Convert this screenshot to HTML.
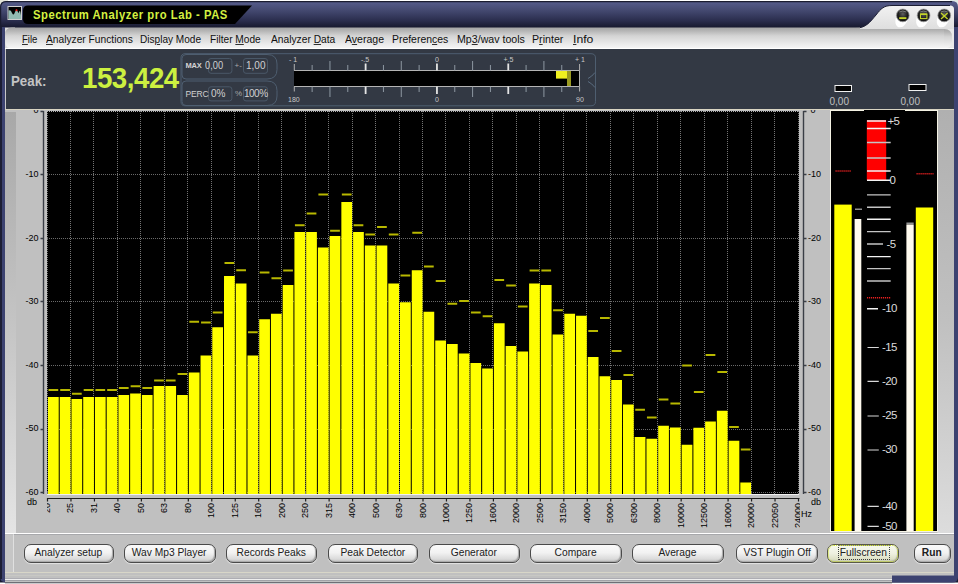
<!DOCTYPE html>
<html><head><meta charset="utf-8"><style>
*{box-sizing:border-box}
html,body{margin:0;padding:0}
body{width:958px;height:584px;position:relative;overflow:hidden;background:#fff;font-family:"Liberation Sans", sans-serif;}
.abs{position:absolute}
.menu{position:absolute;top:33px;transform-origin:0 0;font-size:11px;color:#101010;white-space:nowrap;line-height:12px}
.menu u{text-decoration:underline;text-decoration-thickness:1px;text-underline-offset:1px;text-decoration-color:#303030}
.yl{position:absolute;left:0;width:38.5px;text-align:right;font-size:9px;line-height:12px;color:#000}
.yr{position:absolute;left:808px;width:30px;text-align:left;font-size:9px;line-height:12px;color:#000}
.xl{position:absolute;top:503px;height:10px;font-size:9px;line-height:10px;color:#000;transform-origin:0 0;transform:rotate(-90deg) translateX(-100%);white-space:nowrap}
.btn{position:absolute;top:543.5px;height:19px;border-radius:7px;border:1px solid #4a4a4a;background:linear-gradient(#fafafa 0%,#f2f2f2 45%,#dcdcdc 80%,#c4c4c4 100%);box-shadow:0 1px 1px #e4e4e4, inset -1px -1px 1px #a8a8a8;font-size:11px;line-height:16px;text-align:center;color:#202020;white-space:nowrap}
.btn span{display:inline-block;transform:scaleX(0.93);position:relative;top:-1px}
</style></head><body>
<!-- window frame -->
<div class="abs" style="left:0;top:0;width:958px;height:584px;background:#c0c0c0"></div>
<svg class="abs" style="left:0;top:0" width="958" height="584">
 <defs>
  <linearGradient id="tg" gradientUnits="userSpaceOnUse" x1="0" y1="2" x2="0" y2="27">
   <stop offset="0" stop-color="#555b8a"/><stop offset="0.35" stop-color="#43486f"/><stop offset="0.75" stop-color="#2a2d4d"/><stop offset="1" stop-color="#181a30"/>
  </linearGradient>
  <linearGradient id="sg" x1="0" y1="0" x2="0" y2="1">
   <stop offset="0" stop-color="#f2f2f2"/><stop offset="1" stop-color="#dedede"/>
  </linearGradient>
  <linearGradient id="mg" x1="0" y1="0" x2="0" y2="1">
   <stop offset="0" stop-color="#a4a4a4"/><stop offset="0.15" stop-color="#b4b4b4"/><stop offset="0.4" stop-color="#d4d4d4"/><stop offset="0.75" stop-color="#e8e8e8"/><stop offset="1" stop-color="#f6f6f6"/>
  </linearGradient>
  <linearGradient id="lsg" x1="0" y1="0" x2="0" y2="1">
   <stop offset="0" stop-color="#a8a8a8"/><stop offset="0.5" stop-color="#c4c4c4"/><stop offset="1" stop-color="#e4e4e4"/>
  </linearGradient>
  <linearGradient id="rsg" x1="0" y1="0" x2="0" y2="1">
   <stop offset="0" stop-color="#b0b0b0"/><stop offset="0.5" stop-color="#c0c0c0"/><stop offset="1" stop-color="#dcdcdc"/>
  </linearGradient>
  <radialGradient id="bg1" cx="0.5" cy="0.35" r="0.6">
   <stop offset="0" stop-color="#606060"/><stop offset="0.7" stop-color="#1c1c1c"/><stop offset="1" stop-color="#101010"/>
  </radialGradient>
 </defs>
 <rect x="0" y="0" width="958" height="584" fill="#ffffff"/>
 <rect x="0" y="0" width="8" height="8" fill="#e4e4d8"/>
 <rect x="950" y="0" width="8" height="8" fill="#dfe8e4"/>
 <!-- frame navy -->
 <path d="M0 8Q0 1 7 1H952Q958 1 958 7V584H0Z" fill="url(#tg)"/>

 <path d="M0.6 27V7Q0.6 1.6 6 1.6H952" fill="none" stroke="#1a1c30" stroke-width="1.2"/>
 <!-- title black tab -->
 <path d="M28 5.5H252L235 24H28Q23 24 23 19V10.5Q23 5.5 28 5.5Z" fill="#000"/>
 <!-- icon -->
 <rect x="7.5" y="6" width="14.5" height="14" fill="#d0d0d0"/>
 <rect x="8.5" y="7" width="12.5" height="12" fill="#000"/>
 <path d="M8.5 19V10.5L10 10.3L11 11L12 13L13 14.5L14 14.2L15 12L16 10.3L17 10.5L18 12L18.6 13.2L19.5 10.8L20.3 11.5L21 15.5V19Z" fill="#92bab2"/>
 <circle cx="16.5" cy="10.2" r="1" fill="#ff2020"/>
 <!-- silver area top-right -->
 <path d="M856 28C866 28 870 22 876 15C881 8.5 884 5.5 892 5.5H950Q954 5.5 954 9V29.5H856Z" fill="url(#sg)"/>
 <path d="M856 28C866 28 870 22 876 15C881 8.5 884 5.5 892 5.5H950" fill="none" stroke="#1c1e34" stroke-width="1"/>
 <!-- menubar -->
 <rect x="5" y="27.5" width="10" height="21" fill="#dcdcdc"/>
 <path d="M12 27.5H860V29H944Q952 29 952 37V41Q952 48.5 944 48.5H12Q5 48.5 5 41V35Q5 27.5 12 27.5Z" fill="url(#mg)"/>
 <rect x="944" y="29" width="10" height="20" fill="#e8e8e8"/>
 <path d="M944 29Q952 29 952 37V41Q952 48.5 944 48.5Z" fill="url(#mg)"/>
 <rect x="5" y="48" width="949" height="1" fill="#ffffff"/>
 <!-- dark panel -->
 <rect x="5" y="49" width="949" height="60" fill="#333944"/>
 <rect x="5" y="49" width="1" height="60" fill="#c8c8c8"/>
 <rect x="5" y="109" width="949" height="1" fill="#d8d4c2"/>
 <!-- main gray -->
 <rect x="5" y="110" width="949" height="424" fill="#c0c0c0"/>
 <rect x="5" y="112" width="11" height="421" fill="url(#lsg)"/>
 <rect x="937.5" y="110" width="16.5" height="423" fill="url(#rsg)"/>
 <rect x="5" y="533" width="949" height="1.2" fill="#ffffff"/>
 <!-- button panel -->
 <rect x="5" y="534.2" width="949" height="38" fill="#c0c0c0"/>
 <rect x="5" y="534.2" width="8" height="38" fill="#c6c6c6"/>
 <rect x="13" y="534.2" width="1" height="38" fill="#e0e0e0"/>
 <rect x="5" y="572" width="949" height="1" fill="#d8d6c8"/>
 <rect x="5" y="573" width="949" height="5.5" fill="#c0c0c0"/>
 <rect x="5" y="575" width="949" height="1" fill="#c8c8c4"/>
 <rect x="5" y="578.5" width="887" height="2" fill="#eeeeee"/>
 <rect x="5" y="580.5" width="887" height="2" fill="#c0c0c0"/>
 <rect x="0" y="582.5" width="958" height="1.5" fill="#ffffff"/>
 <rect x="5" y="582.3" width="887" height="1" fill="#505058"/>
 <path d="M892 575.5H954V27H958V577Q958 582.5 952 582.5H892Z" fill="#3c4270"/>
 <path d="M0 27H5V582.5H6Q0 582.5 0 576Z" fill="#3c4270"/>
 <rect x="0" y="27" width="2" height="552" fill="#1c1e34"/>
 <path d="M185 53.7H591Q595.5 53.7 595.5 58V101.5Q595.5 105.8 591 105.8H185Q181 105.8 181 101.5V58Q181 53.7 185 53.7Z" fill="none" stroke="#4e5e70" stroke-width="1"/>
<path d="M186 54.5H267Q277 54.5 277 64V69.5Q277 79 267 79H186Q182 79 182 75V58.5Q182 54.5 186 54.5Z" fill="none" stroke="#4e5e70" stroke-width="1"/>
<path d="M186 81H267Q277 81 277 90.5V96Q277 105.5 267 105.5H186Q182 105.5 182 101.5V85Q182 81 186 81Z" fill="none" stroke="#4e5e70" stroke-width="1"/>
<rect x="208.5" y="58.5" width="23.400000000000006" height="14.799999999999997" rx="2.5" fill="none" stroke="#4a5868" stroke-width="1"/>
<rect x="243.5" y="58.5" width="24" height="14.799999999999997" rx="2.5" fill="none" stroke="#4a5868" stroke-width="1"/>
<rect x="208.5" y="86.8" width="23.400000000000006" height="14.100000000000009" rx="2.5" fill="none" stroke="#4a5868" stroke-width="1"/>
<rect x="243.5" y="86.8" width="24" height="14.100000000000009" rx="2.5" fill="none" stroke="#4a5868" stroke-width="1"/>
<rect x="294" y="70.5" width="285.5" height="16" fill="#000"/>
<path d="M294 70.5H579.5M294 86.5H579.5M579.5 70.5V86.5" stroke="#b4b4b4" stroke-width="1" fill="none"/>
<path d="M312.13 65V70.5M312.13 86.5V92M329.96 61V70.5M329.96 86.5V97M347.79 65V70.5M347.79 86.5V92M383.45 65V70.5M383.45 86.5V92M401.28 61V70.5M401.28 86.5V97M419.11 65V70.5M419.11 86.5V92M454.77 65V70.5M454.77 86.5V92M472.60 61V70.5M472.60 86.5V97M490.43 65V70.5M490.43 86.5V92M526.09 65V70.5M526.09 86.5V92M543.92 61V70.5M543.92 86.5V97M561.75 65V70.5M561.75 86.5V92" stroke="#8e98a2" stroke-width="1" fill="none"/>
<path d="M294.30 64V70.5M294.30 86.5V91.5M579.58 64V70.5M579.58 86.5V91.5" stroke="#b0b0b0" stroke-width="1" fill="none"/>
<path d="M365.62 63.5V70.5M365.62 86.5V94M436.94 63.5V70.5M436.94 86.5V94M508.26 63.5V70.5M508.26 86.5V94" stroke="#e4e4e4" stroke-width="1.8" fill="none"/>
<rect x="556" y="71" width="11" height="7.6" fill="#f0f020"/>
<rect x="567" y="71" width="4" height="15" fill="#9a9a20"/>
<path d="M595 72.5Q592 76.5 588 78.5M588 81.5Q592 83.5 595 87.5" stroke="#5a6c80" stroke-width="1" fill="none"/>
<rect x="835" y="85.5" width="16.5" height="6" fill="#000" stroke="#f0f0f0" stroke-width="1"/>
<rect x="909" y="84.5" width="17" height="6" fill="#000" stroke="#f0f0f0" stroke-width="1"/>
<rect x="830.5" y="110.5" width="107" height="421" fill="#000" stroke="#f4f2e4" stroke-width="1"/>
<rect x="864" y="110" width="41" height="1.5" fill="#000"/>
<rect x="834.3" y="204.6" width="17.4" height="326.4" fill="#ffff00"/>
<rect x="854.6" y="219" width="6.7" height="312" fill="#fffaee"/>
<rect x="855" y="208.5" width="7" height="1.5" fill="#909090"/>
<rect x="906.4" y="224.4" width="7.3" height="306.6" fill="#fffaee"/>
<rect x="906.4" y="222.5" width="7.3" height="1.5" fill="#909090"/>
<rect x="915.8" y="207.5" width="17.4" height="323.5" fill="#ffff00"/>
<path d="M835.5 171H851.5M916.5 173.7H933.5M867 297.8H890.5" stroke="#e82020" stroke-width="1.4" stroke-dasharray="1.2 0.8"/>
<rect x="866.8" y="120.2" width="19.4" height="60" fill="#ff0000"/>
<path d="M867 128.5H890.7M867 171.0H890.7M867 180.3H890.7M867 219.3H890.7M867 256.6H890.7M867 308.7H878M867 121H886" stroke="#f4f4f4" stroke-width="1.4" fill="none"/>
<path d="M867 142.5H890.7M867 158.0H890.7M867 194.9H890.7M867 207.2H890.7M867 231.6H890.7M867 268.6H890.7M867 281.0H890.7M867 244H883" stroke="#c4c4c4" stroke-width="1.4" fill="none"/>
<path d="M867.5 347.5H878.8M867.5 381.4H878.8M867.5 416.0H878.8M867.5 450.0H878.8M867.5 506.4H878.8M867.5 526.4H878.8" stroke="#d8d8d8" stroke-width="1.2" fill="none"/>
<path d="M896.3 16Q893.8 24 897.8 27Q903.8 29 907.8 20Z" fill="#ffffff" opacity="0.95"/>
<circle cx="902.8" cy="15.4" r="6.4" fill="#2c2c2c" stroke="#9a9a9a" stroke-width="0.7"/>
<circle cx="902.8" cy="15.6" r="5.4" fill="url(#bg1)"/>
<path d="M899.3 12Q902.8 10 906.3 12" stroke="#9a9a9a" stroke-width="0.7" fill="none"/>
<rect x="899.1999999999999" y="17.2" width="7.2" height="1.9" fill="#c4d428"/>
<path d="M917.1 16Q914.6 24 918.6 27Q924.6 29 928.6 20Z" fill="#ffffff" opacity="0.95"/>
<circle cx="923.6" cy="15.4" r="6.4" fill="#2c2c2c" stroke="#9a9a9a" stroke-width="0.7"/>
<circle cx="923.6" cy="15.6" r="5.4" fill="url(#bg1)"/>
<path d="M920.1 12Q923.6 10 927.1 12" stroke="#9a9a9a" stroke-width="0.7" fill="none"/>
<rect x="920.5" y="14.1" width="6.4" height="4.5" fill="none" stroke="#c4d428" stroke-width="1.1"/><rect x="920.1" y="13.5" width="7" height="1.5" fill="#c4d428"/>
<path d="M937.7 16Q935.2 24 939.2 27Q945.2 29 949.2 20Z" fill="#ffffff" opacity="0.95"/>
<circle cx="944.2" cy="15.4" r="6.4" fill="#2c2c2c" stroke="#9a9a9a" stroke-width="0.7"/>
<circle cx="944.2" cy="15.6" r="5.4" fill="url(#bg1)"/>
<path d="M940.7 12Q944.2 10 947.7 12" stroke="#9a9a9a" stroke-width="0.7" fill="none"/>
<path d="M941.0 12.9L947.6 18.9M947.6 12.9L941.0 18.9" stroke="#c4d428" stroke-width="1.3"/>
 <!-- chart -->
 <rect x="47.0" y="111.0" width="752" height="383.0" fill="#000"/>
<path d="M47.50 111.0V494.0M70.50 111.0V494.0M93.50 111.0V494.0M117.50 111.0V494.0M140.50 111.0V494.0M164.50 111.0V494.0M187.50 111.0V494.0M211.50 111.0V494.0M234.50 111.0V494.0M258.50 111.0V494.0M281.50 111.0V494.0M305.50 111.0V494.0M328.50 111.0V494.0M352.50 111.0V494.0M375.50 111.0V494.0M399.50 111.0V494.0M422.50 111.0V494.0M445.50 111.0V494.0M469.50 111.0V494.0M492.50 111.0V494.0M516.50 111.0V494.0M539.50 111.0V494.0M563.50 111.0V494.0M586.50 111.0V494.0M610.50 111.0V494.0M633.50 111.0V494.0M657.50 111.0V494.0M680.50 111.0V494.0M704.50 111.0V494.0M727.50 111.0V494.0M751.50 111.0V494.0M774.50 111.0V494.0M798.50 111.0V494.0" stroke="#747474" stroke-width="1" stroke-dasharray="1 1" fill="none"/>
<path d="M47.0 174.50H799.0M47.0 238.50H799.0M47.0 301.50H799.0M47.0 365.50H799.0M47.0 429.50H799.0M47.0 492.50H799.0" stroke="#6a6a6a" stroke-width="1" stroke-dasharray="1 1" fill="none"/>
<path d="M47.0 111.50H799.0" stroke="#b0b0b0" stroke-width="1" stroke-dasharray="1 1" fill="none"/>
<path d="M48.00 397.1H58.73V494.0H48.00ZM59.73 397.1H70.47V494.0H59.73ZM71.47 398.9H82.20V494.0H71.47ZM83.20 397.1H93.94V494.0H83.20ZM94.94 397.1H105.67V494.0H94.94ZM106.67 397.1H117.41V494.0H106.67ZM118.41 395.0H129.14V494.0H118.41ZM130.14 393.4H140.88V494.0H130.14ZM141.88 395.0H152.61V494.0H141.88ZM153.61 385.9H164.34V494.0H153.61ZM165.34 385.9H176.08V494.0H165.34ZM177.08 395.0H187.81V494.0H177.08ZM188.81 372.5H199.55V494.0H188.81ZM200.55 355.5H211.28V494.0H200.55ZM212.28 327.3H223.02V494.0H212.28ZM224.02 276.0H234.75V494.0H224.02ZM235.75 283.4H246.48V494.0H235.75ZM247.48 355.5H258.22V494.0H247.48ZM259.22 319.3H269.95V494.0H259.22ZM270.95 313.8H281.69V494.0H270.95ZM282.69 285.0H293.42V494.0H282.69ZM294.42 232.1H305.16V494.0H294.42ZM306.16 232.1H316.89V494.0H306.16ZM317.89 247.5H328.62V494.0H317.89ZM329.62 236.0H340.36V494.0H329.62ZM341.36 202.0H352.09V494.0H341.36ZM353.09 232.1H363.83V494.0H353.09ZM364.83 245.5H375.56V494.0H364.83ZM376.56 245.5H387.30V494.0H376.56ZM388.30 283.6H399.03V494.0H388.30ZM400.03 302.3H410.77V494.0H400.03ZM411.77 270.2H422.50V494.0H411.77ZM423.50 311.8H434.23V494.0H423.50ZM435.23 340.4H445.97V494.0H435.23ZM446.97 344.0H457.70V494.0H446.97ZM458.70 353.6H469.44V494.0H458.70ZM470.44 362.9H481.17V494.0H470.44ZM482.17 368.6H492.91V494.0H482.17ZM493.91 323.2H504.64V494.0H493.91ZM505.64 345.9H516.38V494.0H505.64ZM517.38 351.6H528.11V494.0H517.38ZM529.11 283.4H539.84V494.0H529.11ZM540.84 285.0H551.58V494.0H540.84ZM552.58 334.5H563.31V494.0H552.58ZM564.31 313.8H575.05V494.0H564.31ZM576.05 315.7H586.78V494.0H576.05ZM587.78 357.1H598.52V494.0H587.78ZM599.52 376.3H610.25V494.0H599.52ZM611.25 379.9H621.98V494.0H611.25ZM622.98 404.5H633.72V494.0H622.98ZM634.72 437.1H645.45V494.0H634.72ZM646.45 438.8H657.19V494.0H646.45ZM658.19 425.7H668.92V494.0H658.19ZM669.92 427.6H680.66V494.0H669.92ZM681.66 444.7H692.39V494.0H681.66ZM693.39 427.7H704.12V494.0H693.39ZM705.12 421.6H715.86V494.0H705.12ZM716.86 410.7H727.59V494.0H716.86ZM728.59 440.8H739.33V494.0H728.59ZM740.33 482.5H751.06V494.0H740.33Z" fill="#ffff00"/>
<path d="M48.50 389.0H58.23V391.0H48.50ZM60.23 389.0H69.97V391.0H60.23ZM71.97 392.7H81.70V394.7H71.97ZM83.70 389.0H93.44V391.0H83.70ZM95.44 389.0H105.17V391.0H95.44ZM107.17 389.0H116.91V391.0H107.17ZM118.91 387.0H128.64V389.0H118.91ZM130.64 385.2H140.38V387.2H130.64ZM142.38 387.0H152.11V389.0H142.38ZM154.11 379.4H163.84V381.4H154.11ZM165.84 379.4H175.58V381.4H165.84ZM177.58 372.9H187.31V374.9H177.58ZM189.31 320.8H199.05V322.8H189.31ZM201.05 321.6H210.78V323.6H201.05ZM212.78 311.5H222.52V313.5H212.78ZM224.52 261.9H234.25V263.9H224.52ZM236.25 269.3H245.98V271.3H236.25ZM247.98 331.2H257.72V333.2H247.98ZM259.72 271.5H269.45V273.5H259.72ZM271.45 277.2H281.19V279.2H271.45ZM283.19 269.4H292.92V271.4H283.19ZM294.92 224.3H304.66V226.3H294.92ZM306.66 212.5H316.39V214.5H306.66ZM318.39 193.6H328.12V195.6H318.39ZM330.12 229.8H339.86V231.8H330.12ZM341.86 193.6H351.59V195.6H341.86ZM353.59 224.3H363.33V226.3H353.59ZM365.33 233.6H375.06V235.6H365.33ZM377.06 225.9H386.80V227.9H377.06ZM388.80 233.6H398.53V235.6H388.80ZM400.53 274.4H410.27V276.4H400.53ZM412.27 231.7H422.00V233.7H412.27ZM424.00 265.6H433.73V267.6H424.00ZM435.73 280.0H445.47V282.0H435.73ZM447.47 302.7H457.20V304.7H447.47ZM459.20 300.0H468.94V302.0H459.20ZM470.94 311.5H480.67V313.5H470.94ZM482.67 315.3H492.41V317.3H482.67ZM494.41 279.1H504.14V281.1H494.41ZM506.14 284.6H515.88V286.6H506.14ZM517.88 305.4H527.61V307.4H517.88ZM529.61 269.5H539.34V271.5H529.61ZM541.34 269.5H551.08V271.5H541.34ZM553.08 309.2H562.81V311.2H553.08ZM588.28 330.1H598.02V332.1H588.28ZM600.02 317.0H609.75V319.0H600.02ZM611.75 350.1H621.48V352.1H611.75ZM623.48 373.9H633.22V375.9H623.48ZM635.22 408.7H644.95V410.7H635.22ZM646.95 416.4H656.69V418.4H646.95ZM658.69 398.4H668.42V400.4H658.69ZM670.42 402.4H680.16V404.4H670.42ZM682.16 364.4H691.89V366.4H682.16ZM693.89 391.0H703.62V393.0H693.89ZM705.62 354.0H715.36V356.0H705.62ZM717.36 371.0H727.09V373.0H717.36ZM729.09 426.1H738.83V428.1H729.09ZM740.83 448.6H750.56V450.6H740.83Z" fill="#b8b800"/>
 <!-- axes -->
 <path d="M43.5 111V494M803.5 111V494M40.5 111.5H43.5M803.5 111.5H806.5M40.5 174.5H43.5M803.5 174.5H806.5M40.5 238.5H43.5M803.5 238.5H806.5M40.5 301.5H43.5M803.5 301.5H806.5M40.5 365.5H43.5M803.5 365.5H806.5M40.5 429.5H43.5M803.5 429.5H806.5M40.5 492.5H43.5M803.5 492.5H806.5" stroke="#3a3e46" stroke-width="1.4" fill="none"/>
 <path d="M47 498.5H799.5M47.50 498V501.5M70.97 498V501.5M94.44 498V501.5M117.91 498V501.5M141.38 498V501.5M164.84 498V501.5M188.31 498V501.5M211.78 498V501.5M235.25 498V501.5M258.72 498V501.5M282.19 498V501.5M305.66 498V501.5M329.12 498V501.5M352.59 498V501.5M376.06 498V501.5M399.53 498V501.5M423.00 498V501.5M446.47 498V501.5M469.94 498V501.5M493.41 498V501.5M516.88 498V501.5M540.34 498V501.5M563.81 498V501.5M587.28 498V501.5M610.75 498V501.5M634.22 498V501.5M657.69 498V501.5M681.16 498V501.5M704.62 498V501.5M728.09 498V501.5M751.56 498V501.5M775.03 498V501.5M798.50 498V501.5" stroke="#202020" stroke-width="1.2" fill="none"/>
 <rect x="47" y="494" width="752" height="1" fill="#f0f0f0"/>
</svg>
<!-- title text -->
<div class="abs" style="left:33px;top:8px;transform:scaleX(0.9);transform-origin:0 0;letter-spacing:0.6px;font-size:12.5px;font-weight:bold;color:#d4f040;white-space:nowrap;line-height:14px" id="title" >Spectrum Analyzer pro Lab - PAS</div>
<!-- menu -->
<div class="menu" style="left:22px;transform:scaleX(0.871)"><u>F</u>ile</div>
<div class="menu" style="left:46px;transform:scaleX(0.929)"><u>A</u>nalyzer Functions</div>
<div class="menu" style="left:140px;transform:scaleX(0.915)">Dis<u>p</u>lay Mode</div>
<div class="menu" style="left:210px;transform:scaleX(0.922)">Filter <u>M</u>ode</div>
<div class="menu" style="left:270.5px;transform:scaleX(0.93)">Analyzer <u>D</u>ata</div>
<div class="menu" style="left:345px;transform:scaleX(0.958)">A<u>v</u>erage</div>
<div class="menu" style="left:392px;transform:scaleX(0.948)">Preferen<u>c</u>es</div>
<div class="menu" style="left:456.5px;transform:scaleX(0.966)">Mp<u>3</u>/wav tools</div>
<div class="menu" style="left:532px;transform:scaleX(0.969)">P<u>r</u>inter</div>
<div class="menu" style="left:573px;transform:scaleX(1.109)"><u>I</u>nfo</div>
<!-- peak -->
<div class="abs" style="left:11px;top:74px;font-size:14px;font-weight:bold;color:#c4c4c4;line-height:14px;transform:scaleX(0.95);transform-origin:0 0">Peak:</div>
<div class="abs" style="left:82px;top:64px;font-size:29px;font-weight:bold;color:#ccf040;line-height:28px;letter-spacing:-0.5px;transform:scaleX(0.955);transform-origin:0 0">153,424</div>
<!-- labels -->
<div class="abs" style="left:0;top:110px;width:958px;height:385px;overflow:hidden"><div class="yl" style="top:-5.7px">0</div><div class="yr" style="top:-5.7px;left:810.5px">0</div><div class="yl" style="top:57.9px">-10</div><div class="yr" style="top:57.9px">-10</div><div class="yl" style="top:121.5px">-20</div><div class="yr" style="top:121.5px">-20</div><div class="yl" style="top:185.1px">-30</div><div class="yr" style="top:185.1px">-30</div><div class="yl" style="top:248.7px">-40</div><div class="yr" style="top:248.7px">-40</div><div class="yl" style="top:312.3px">-50</div><div class="yr" style="top:312.3px">-50</div><div class="yl" style="top:375.9px">-60</div><div class="yr" style="top:375.9px">-60</div></div>
<div class="abs" style="left:27px;top:497px;font-size:9px;line-height:10px">db</div>
<div class="abs" style="left:811px;top:497px;font-size:9px;line-height:10px">db</div>
<div class="abs" style="left:801px;top:509px;font-size:9px;line-height:10px">Hz</div>
<div class="abs" style="left:47px;top:495px;width:753px;height:40px;overflow:hidden">
 <div class="abs" style="left:-47px;top:-495px;width:958px;height:584px"><div class="xl" style="left:42.00px">20</div><div class="xl" style="left:65.47px">25</div><div class="xl" style="left:88.94px">31</div><div class="xl" style="left:112.41px">40</div><div class="xl" style="left:135.88px">50</div><div class="xl" style="left:159.34px">63</div><div class="xl" style="left:182.81px">80</div><div class="xl" style="left:206.28px">100</div><div class="xl" style="left:229.75px">125</div><div class="xl" style="left:253.22px">160</div><div class="xl" style="left:276.69px">200</div><div class="xl" style="left:300.16px">250</div><div class="xl" style="left:323.62px">315</div><div class="xl" style="left:347.09px">400</div><div class="xl" style="left:370.56px">500</div><div class="xl" style="left:394.03px">630</div><div class="xl" style="left:417.50px">800</div><div class="xl" style="left:440.97px">1000</div><div class="xl" style="left:464.44px">1250</div><div class="xl" style="left:487.91px">1600</div><div class="xl" style="left:511.38px">2000</div><div class="xl" style="left:534.84px">2500</div><div class="xl" style="left:558.31px">3150</div><div class="xl" style="left:581.78px">4000</div><div class="xl" style="left:605.25px">5000</div><div class="xl" style="left:628.72px">6300</div><div class="xl" style="left:652.19px">8000</div><div class="xl" style="left:675.66px">10000</div><div class="xl" style="left:699.12px">12500</div><div class="xl" style="left:722.59px">16000</div><div class="xl" style="left:746.06px">20000</div><div class="xl" style="left:769.53px">22050</div><div class="xl" style="left:793.00px">24000</div></div>
</div>
<div class="abs" style="left:289px;top:54.7px;font-size:7px;line-height:9px;color:#c8c8c8;white-space:nowrap;">- 1</div><div class="abs" style="left:361px;top:54.7px;font-size:7px;line-height:9px;color:#c8c8c8;white-space:nowrap;">-.5</div><div class="abs" style="left:435px;top:54.7px;font-size:7px;line-height:9px;color:#c8c8c8;white-space:nowrap;">0</div><div class="abs" style="left:503.5px;top:54.7px;font-size:7px;line-height:9px;color:#c8c8c8;white-space:nowrap;">+.5</div><div class="abs" style="left:575px;top:54.7px;font-size:7px;line-height:9px;color:#c8c8c8;white-space:nowrap;">+ 1</div><div class="abs" style="left:288px;top:94.5px;font-size:7px;line-height:9px;color:#c8c8c8;white-space:nowrap;">180</div><div class="abs" style="left:435px;top:94.5px;font-size:7px;line-height:9px;color:#c8c8c8;white-space:nowrap;">0</div><div class="abs" style="left:576px;top:94.5px;font-size:7px;line-height:9px;color:#c8c8c8;white-space:nowrap;">90</div><div class="abs" style="left:185.5px;top:60.5px;font-size:7.5px;line-height:9.5px;color:#d4d4d4;white-space:nowrap;font-weight:bold;letter-spacing:-0.2px">MAX</div><div class="abs" style="left:185.5px;top:88.5px;font-size:8.5px;line-height:10.5px;color:#d0d0d0;white-space:nowrap;letter-spacing:-0.2px">PERC</div><div class="abs" style="left:205px;top:59.5px;font-size:10px;line-height:12px;color:#d0d0d0;white-space:nowrap;transform:scaleX(0.93);transform-origin:0 0">0,00</div><div class="abs" style="left:246px;top:59.5px;font-size:10px;line-height:12px;color:#d0d0d0;white-space:nowrap;">1,00</div><div class="abs" style="left:234.5px;top:61px;font-size:8px;line-height:10px;color:#a8a8a8;white-space:nowrap;">+-</div><div class="abs" style="left:211px;top:87.5px;font-size:10px;line-height:12px;color:#d0d0d0;white-space:nowrap;">0%</div><div class="abs" style="left:244px;top:87.5px;font-size:10px;line-height:12px;color:#d0d0d0;white-space:nowrap;letter-spacing:-0.5px">100%</div><div class="abs" style="left:235px;top:89px;font-size:8px;line-height:10px;color:#a8a8a8;white-space:nowrap;">%</div><div class="abs" style="left:829.5px;top:95.5px;font-size:10px;line-height:12px;color:#c0c0c0;white-space:nowrap;">0,00</div><div class="abs" style="left:900.5px;top:95.5px;font-size:10px;line-height:12px;color:#c0c0c0;white-space:nowrap;">0,00</div><div class="abs" style="left:860px;top:100px;width:60px;height:430px;overflow:hidden"><div class="abs" style="left:27.5px;top:14.5px;font-size:11.5px;line-height:13.5px;color:#dcdcdc;white-space:nowrap;letter-spacing:-0.6px">+5</div><div class="abs" style="left:29.5px;top:74.0px;font-size:11.5px;line-height:13.5px;color:#dcdcdc;white-space:nowrap;letter-spacing:-0.6px">0</div><div class="abs" style="left:26.5px;top:137.5px;font-size:11.5px;line-height:13.5px;color:#dcdcdc;white-space:nowrap;letter-spacing:-0.6px">-5</div><div class="abs" style="left:22px;top:201.5px;font-size:11.5px;line-height:13.5px;color:#dcdcdc;white-space:nowrap;letter-spacing:-0.6px">-10</div><div class="abs" style="left:22px;top:240.5px;font-size:11.5px;line-height:13.5px;color:#dcdcdc;white-space:nowrap;letter-spacing:-0.6px">-15</div><div class="abs" style="left:22px;top:274.5px;font-size:11.5px;line-height:13.5px;color:#dcdcdc;white-space:nowrap;letter-spacing:-0.6px">-20</div><div class="abs" style="left:22px;top:309.0px;font-size:11.5px;line-height:13.5px;color:#dcdcdc;white-space:nowrap;letter-spacing:-0.6px">-25</div><div class="abs" style="left:22px;top:343.0px;font-size:11.5px;line-height:13.5px;color:#dcdcdc;white-space:nowrap;letter-spacing:-0.6px">-30</div><div class="abs" style="left:22px;top:399.5px;font-size:11.5px;line-height:13.5px;color:#dcdcdc;white-space:nowrap;letter-spacing:-0.6px">-40</div><div class="abs" style="left:22px;top:419.5px;font-size:11.5px;line-height:13.5px;color:#dcdcdc;white-space:nowrap;letter-spacing:-0.6px">-50</div></div>
<!-- buttons -->
<div class="btn" style="left:23.5px;width:90px"><span>Analyzer setup</span></div>
<div class="btn" style="left:123.5px;width:92px"><span>Wav Mp3 Player</span></div>
<div class="btn" style="left:225.5px;width:91px"><span>Records Peaks</span></div>
<div class="btn" style="left:327.5px;width:90px"><span>Peak Detector</span></div>
<div class="btn" style="left:428.5px;width:91px"><span>Generator</span></div>
<div class="btn" style="left:529.5px;width:92px"><span>Compare</span></div>
<div class="btn" style="left:631.5px;width:92px"><span>Average</span></div>
<div class="btn" style="left:736px;width:82px"><span>VST Plugin Off</span></div>
<div class="btn" style="left:827px;width:72px;background:linear-gradient(#f8faf0,#eef0e0 50%,#dfe2c8 80%,#c8ccb0);border-color:#5a5a48"><div class="abs" style="left:0;top:0;right:0;bottom:0;border:1px dotted #d4e830;border-radius:6px"></div><div class="abs" style="left:10px;top:0.5px;width:51.5px;height:15px;border:1px dotted #404040;border-top-color:#808080"></div><span>Fullscreen</span></div>
<div class="btn" style="left:913.5px;width:37px;font-weight:bold"><span>Run</span></div>
</body></html>
